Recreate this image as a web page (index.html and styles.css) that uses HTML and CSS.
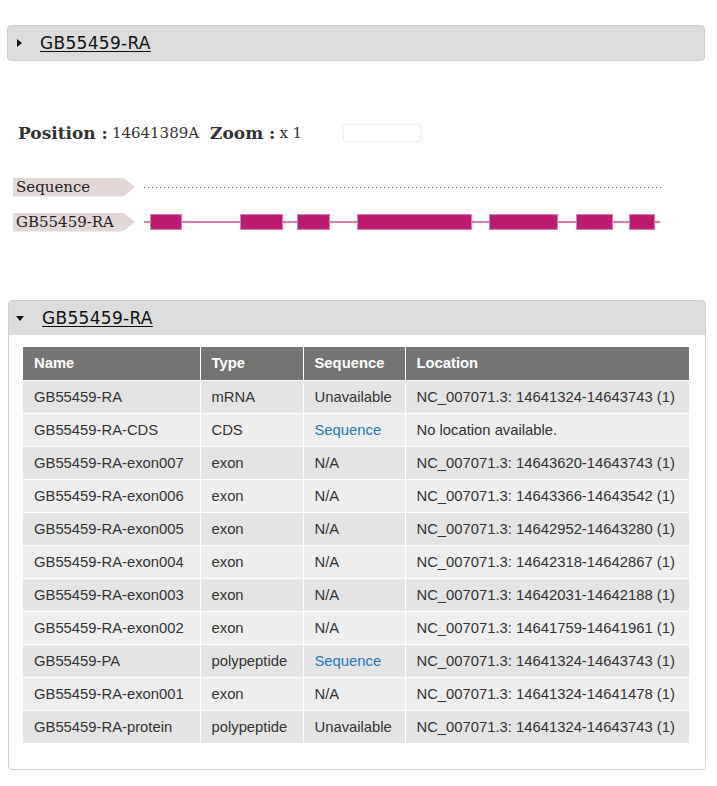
FILE: index.html
```html
<!DOCTYPE html>
<html>
<head>
<meta charset="utf-8">
<link rel="stylesheet" href="styles.css">
</head>
<body>
<div class="page">
  <div class="collapsed">
    <span class="tri-right"></span>
    <a class="title" href="#">GB55459-RA</a>
  </div>

  <div class="viewer">
    <div class="pos-line">
      <b>Position :</b><span class="val">14641389A</span>
      <b class="zl">Zoom :</b><span class="val">x 1</span>
      <span class="zoombox"></span>
    </div>
    <div class="track">
      <span class="tlabel">Sequence</span>
      <svg class="tsvg" width="520" height="20" viewBox="0 0 520 20">
        <line x1="0" y1="10.5" x2="518" y2="10.5" stroke="#666" stroke-width="1" stroke-dasharray="1 3"/>
      </svg>
    </div>
    <div class="track">
      <span class="tlabel">GB55459-RA</span>
      <svg class="tsvg" width="520" height="20" viewBox="0 0 520 20">
        <line x1="0" y1="10" x2="516" y2="10" stroke="#d67aae" stroke-width="2"/>
        <g fill="#bb1c6e" stroke="#d97cb0" stroke-width="1">
          <rect x="6.5" y="2.5" width="31" height="15"/>
          <rect x="96.5" y="2.5" width="42" height="15"/>
          <rect x="153.5" y="2.5" width="32" height="15"/>
          <rect x="213.5" y="2.5" width="114" height="15"/>
          <rect x="345.5" y="2.5" width="68" height="15"/>
          <rect x="432.5" y="2.5" width="36" height="15"/>
          <rect x="485.5" y="2.5" width="25" height="15"/>
        </g>
      </svg>
    </div>
  </div>

  <div class="panel">
    <div class="panel-head">
      <span class="tri-down"></span>
      <a class="title" href="#">GB55459-RA</a>
    </div>
    <div class="panel-body">
      <table class="feat">
        <thead>
          <tr><th class="c1">Name</th><th class="c2">Type</th><th class="c3">Sequence</th><th class="c4">Location</th></tr>
        </thead>
        <tbody>
          <tr><td>GB55459-RA</td><td>mRNA</td><td>Unavailable</td><td>NC_007071.3: 14641324-14643743 (1)</td></tr>
          <tr><td>GB55459-RA-CDS</td><td>CDS</td><td><a href="#">Sequence</a></td><td>No location available.</td></tr>
          <tr><td>GB55459-RA-exon007</td><td>exon</td><td>N/A</td><td>NC_007071.3: 14643620-14643743 (1)</td></tr>
          <tr><td>GB55459-RA-exon006</td><td>exon</td><td>N/A</td><td>NC_007071.3: 14643366-14643542 (1)</td></tr>
          <tr><td>GB55459-RA-exon005</td><td>exon</td><td>N/A</td><td>NC_007071.3: 14642952-14643280 (1)</td></tr>
          <tr><td>GB55459-RA-exon004</td><td>exon</td><td>N/A</td><td>NC_007071.3: 14642318-14642867 (1)</td></tr>
          <tr><td>GB55459-RA-exon003</td><td>exon</td><td>N/A</td><td>NC_007071.3: 14642031-14642188 (1)</td></tr>
          <tr><td>GB55459-RA-exon002</td><td>exon</td><td>N/A</td><td>NC_007071.3: 14641759-14641961 (1)</td></tr>
          <tr><td>GB55459-PA</td><td>polypeptide</td><td><a href="#">Sequence</a></td><td>NC_007071.3: 14641324-14643743 (1)</td></tr>
          <tr><td>GB55459-RA-exon001</td><td>exon</td><td>N/A</td><td>NC_007071.3: 14641324-14641478 (1)</td></tr>
          <tr><td>GB55459-RA-protein</td><td>polypeptide</td><td>Unavailable</td><td>NC_007071.3: 14641324-14643743 (1)</td></tr>
        </tbody>
      </table>
    </div>
  </div>
</div>
</body>
</html>
```

FILE: styles.css
```css
html, body {
  margin: 0;
  padding: 0;
  background: #fff;
}
.page {
  padding: 25px 12px 0 7px;
  width: 698px;
}
.collapsed {
  height: 36px;
  background: #dcdcdc;
  border: 1px solid #d0d0d0;
  border-radius: 4px;
  box-sizing: border-box;
  display: flex;
  align-items: center;
  padding-left: 9px;
}
.tri-right {
  width: 0;
  height: 0;
  border-top: 4px solid transparent;
  border-bottom: 4px solid transparent;
  border-left: 5px solid #111;
  margin-right: 18px;
}
.tri-down {
  width: 0;
  height: 0;
  border-left: 4px solid transparent;
  border-right: 4px solid transparent;
  border-top: 5px solid #111;
  margin-right: 18px;
}
.title {
  font-family: "DejaVu Sans", sans-serif;
  font-size: 17px;
  letter-spacing: 0.3px;
  color: #111;
  text-decoration: underline;
  text-underline-offset: 2px;
}
.viewer {
  padding: 62px 0 0 6px;
  height: 177px;
  box-sizing: border-box;
  font-family: "DejaVu Serif", serif;
  color: #333;
}
.pos-line {
  display: flex;
  align-items: center;
  height: 20px;
  padding-left: 5px;
}
.pos-line b {
  font-size: 17px;
  font-weight: bold;
  color: #333;
}
.pos-line .val {
  font-size: 15px;
  margin-left: 4px;
}
.pos-line .zl {
  margin-left: 11px;
}
.zoombox {
  width: 78px;
  height: 18px;
  margin-left: 41px;
  border: 1px solid #f0f0f0;
  border-radius: 3px;
  box-shadow: 0 0 2px #eee;
  box-sizing: border-box;
}
.track {
  display: flex;
  align-items: center;
  height: 20px;
  margin-top: 34px;
}
.track + .track {
  margin-top: 15px;
}
.tlabel {
  width: 122px;
  height: 19px;
  box-sizing: border-box;
  background: #e2d8d8;
  clip-path: polygon(0 0, 110px 0, 122px 50%, 110px 100%, 0 100%);
  font-size: 15px;
  line-height: 19px;
  padding-left: 3px;
  color: #222;
}
.tsvg {
  margin-left: 9px;
  display: block;
}
.panel {
  margin: 62px 0 0 1px;
  width: 696px;
  border: 1px solid #cfcfcf;
  border-radius: 4px;
  overflow: hidden;
}
.panel-head {
  height: 34px;
  background: #dcdcdc;
  display: flex;
  align-items: center;
  padding-left: 7px;
}
.panel-body {
  padding: 12px 14px 26px 14px;
}
.feat {
  width: 666px;
  border-collapse: collapse;
  table-layout: fixed;
  font-family: "Liberation Sans", Arial, sans-serif;
  font-size: 14.8px;
  color: #333;
}
.feat th, .feat td {
  border: 1px solid #fff;
  text-align: left;
  padding: 0 2px 0 11px;
  height: 33px;
  box-sizing: border-box;
  white-space: nowrap;
  overflow: hidden;
}
.feat tr:first-child th, .feat tbody tr:last-child td { border-bottom: none; }
.feat th {
  background: #747474;
  color: #fff;
  font-weight: bold;
  height: 33px;
  border-top: none;
}
.feat th:first-child, .feat td:first-child { border-left: none; }
.feat th:last-child, .feat td:last-child { border-right: none; }
.feat tbody tr:nth-child(odd) td { background: #e4e4e4; }
.feat tbody tr:nth-child(even) td { background: #eeeeee; }
.feat a {
  color: #2377b8;
  text-decoration: none;
}
.c1 { width: 177px; }
.c2 { width: 103px; }
.c3 { width: 102px; }
```
